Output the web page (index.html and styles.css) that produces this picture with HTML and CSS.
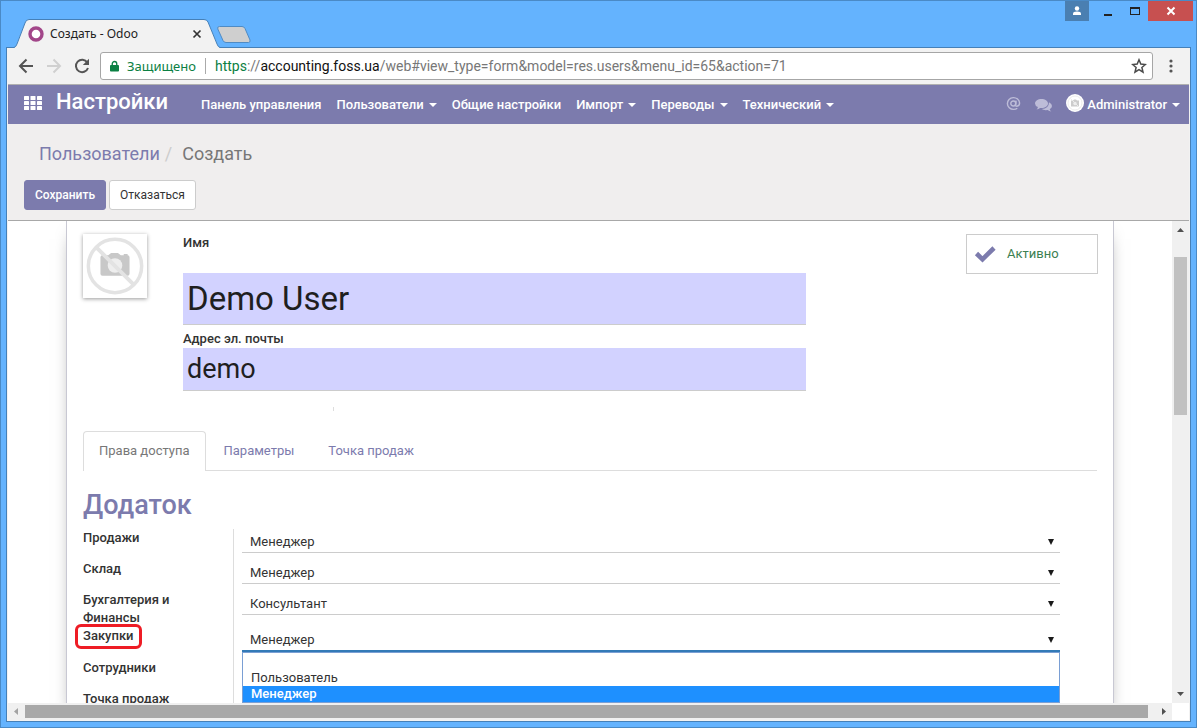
FILE: index.html
```html
<!DOCTYPE html>
<html lang="ru">
<head>
<meta charset="utf-8">
<title>Создать - Odoo</title>
<link rel="stylesheet" href="styles.css">
</head>
<body>
<div class="window">
  <header class="titlebar">
    <div class="tab">
      <svg class="tab-shape" viewBox="0 0 206 29" preserveAspectRatio="none" aria-hidden="true">
        <path d="M0 29 L2 27 L11 4 Q12 .5 15 .5 H190 Q193 .5 194 3 L204 27 L206 29Z" fill="#f2f2f2"/>
        <path d="M0 28.500 Q2 28 3 25 L11 4 Q12 .5 15 .5 H190 Q193 .5 194 3 L203 25 Q204 28 206 28.500" fill="none" stroke="#4580b8"/>
      </svg>
      <svg class="favicon" viewBox="0 0 16 16" aria-hidden="true"><circle cx="8" cy="8" r="6" fill="#fff" stroke="#a24689" stroke-width="3.400"/></svg>
      <span class="tab-title">Создать - Odoo</span>
      <button class="tab-close" aria-label="Закрыть вкладку"><svg viewBox="0 0 10 10"><path d="M1.500 1.500l7 7M8.500 1.500l-7 7" stroke="#333" stroke-width="1.700"/></svg></button>
    </div>
    <button class="new-tab" aria-label="Новая вкладка"><svg viewBox="0 0 34 17"><path d="M2.500 .5H25Q27 .5 28 2.500L33 14Q33.500 16.500 31.500 16.500H9Q7 16.500 6 14.500L.8 3Q0 .5 2.500 .5Z" fill="#cfcfcf" stroke="#4f8bc4"/></svg></button>
    <div class="caption">
      <button class="cap-user" aria-label="Профиль"><svg viewBox="0 0 10 10"><circle cx="5" cy="2.500" r="2.200" fill="#fff"/><path d="M1 9V7.500Q1 5.500 5 5.500T9 7.500V9Z" fill="#fff"/></svg></button>
      <button class="cap-min" aria-label="Свернуть"><svg viewBox="0 0 10 10"><path d="M1 7h8v2H1z" fill="#222"/></svg></button>
      <button class="cap-max" aria-label="Развернуть"><svg viewBox="0 0 10 8"><path d="M0 0h10v8H0zM1 2v5h8V2z" fill="#222" fill-rule="evenodd"/></svg></button>
      <button class="cap-close" aria-label="Закрыть"><svg viewBox="0 0 10 10"><path d="M1.500 1.500l7 7M8.500 1.500l-7 7" stroke="#fff" stroke-width="2"/></svg></button>
    </div>
  </header>

  <div class="frame">
    <div class="toolbar">
      <button aria-label="Назад"><svg viewBox="0 0 16 16"><path d="M15 8H2.500M8.500 1.500L2 8l6.500 6.500" fill="none" stroke="#555" stroke-width="2"/></svg></button>
      <button aria-label="Вперёд"><svg viewBox="0 0 16 16"><path d="M1 8h12.500M7.500 1.500L14 8l-6.500 6.500" fill="none" stroke="#d0d0d0" stroke-width="2"/></svg></button>
      <button aria-label="Обновить"><svg viewBox="0 0 16 16"><path d="M13.300 4.500A6.200 6.200 0 1 0 14 10" fill="none" stroke="#555" stroke-width="2"/><path d="M15 .8V7H8.800Z" fill="#555"/></svg></button>
      <div class="omnibox">
        <svg class="lock" viewBox="0 0 10 12" aria-hidden="true"><path d="M1 5h8q1 0 1 1v5q0 1-1 1H1q-1 0-1-1V6q0-1 1-1z" fill="#0b8043"/><path d="M2.500 6V3.500a2.500 2.500 0 0 1 5 0V6" fill="none" stroke="#0b8043" stroke-width="1.500"/></svg>
        <span class="secure">Защищено</span>
        <div class="url" role="textbox" aria-label="Адрес" contenteditable="true" spellcheck="false"><span class="scheme">https</span>://<span class="host">accounting.foss.ua</span>/web#view_type=form&amp;model=res.users&amp;menu_id=65&amp;action=71</div>
        <button class="star" aria-label="В закладки"><svg viewBox="0 0 16 16"><path d="M8 1.800l1.800 4.300 4.600.4-3.500 3 1.100 4.600L8 11.600l-4 2.500 1.100-4.600-3.500-3 4.600-.4z" fill="none" stroke="#4a4a4a" stroke-width="1.500"/></svg></button>
      </div>
      <button class="menu" aria-label="Меню"><svg viewBox="0 0 16 16"><g fill="#555"><circle cx="8" cy="3" r="1.600"/><circle cx="8" cy="8" r="1.600"/><circle cx="8" cy="13" r="1.600"/></g></svg></button>
    </div>

    <nav class="navbar">
      <a class="apps" href="#" aria-label="Приложения"><svg viewBox="0 0 18 14"><g fill="#fff"><rect width="5" height="4" rx=".6"/><rect x="6.500" width="5" height="4" rx=".6"/><rect x="13" width="5" height="4" rx=".6"/><rect y="5" width="5" height="4" rx=".6"/><rect x="6.500" y="5" width="5" height="4" rx=".6"/><rect x="13" y="5" width="5" height="4" rx=".6"/><rect y="10" width="5" height="4" rx=".6"/><rect x="6.500" y="10" width="5" height="4" rx=".6"/><rect x="13" y="10" width="5" height="4" rx=".6"/></g></svg></a>
      <a class="brand" href="#">Настройки</a>
      <div class="nav-links">
        <a href="#">Панель управления</a>
        <a class="has-menu" href="#">Пользователи</a>
        <a href="#">Общие настройки</a>
        <a class="has-menu" href="#">Импорт</a>
        <a class="has-menu" href="#">Переводы</a>
        <a class="has-menu" href="#">Технический</a>
      </div>
      <div class="systray">
        <a class="at" href="#" aria-label="Упоминания"><svg viewBox="0 0 16 16"><g fill="none" stroke="#bdbcd8" stroke-width="1.500"><circle cx="7.800" cy="8" r="2.700"/><path d="M10.800 5l-.7 4.500q0 1.500 1.500 1.500Q14.500 10.500 14.500 7.500A6.500 6.300 0 1 0 8 14.300q2.500 0 4-1.300"/></g></svg></a>
        <a class="chat" href="#" aria-label="Сообщения"><svg viewBox="0 0 17 14"><g fill="#bdbcd8"><path d="M6.500 1C10 1 13 2.900 13 5.500S10 10 6.500 10q-.7 0-1.400-.1Q3.500 11.300 1.500 11.500 2.700 10.500 2.900 9 0 7.800 0 5.500C0 2.900 3 1 6.500 1z"/><path d="M14 4.200q3 1.500 3 3.800 0 2-2.300 3.300.3 1.200 1.600 2.300-2-.2-3.700-1.600-3.600.6-6-1Q14 10.500 14 4.200z"/></g></svg></a>
        <a class="has-menu user" href="#"><svg viewBox="0 0 18 18" aria-hidden="true"><circle cx="9" cy="9" r="9" fill="#fff"/><circle cx="9" cy="9" r="7" fill="none" stroke="#ececec"/><path d="M5 6.500h2l1-1h2l1 1h2v6H5z" fill="#ccc"/><circle cx="9" cy="9.500" r="1.700" fill="#eee"/><path d="M4.500 4.500l9 9" stroke="#ececec"/></svg>Administrator</a>
      </div>
    </nav>

    <section class="control-panel">
      <div class="breadcrumb"><a href="#">Пользователи</a><span class="slash">/</span><span class="current">Создать</span></div>
      <div class="actions"><button class="btn primary">Сохранить</button><button class="btn">Отказаться</button></div>
    </section>

    <div class="viewport">
      <main class="content">
        <form class="sheet">
          <div class="top">
            <div class="avatar"><svg viewBox="0 0 66 66" role="img" aria-label="Нет фото"><path d="M18 24q0-2 2-2h6l3-2.500h7l3 2.500h3v-1.500h4V22q2 0 2 2v17q0 2-2 2H20q-2 0-2-2z" fill="#c8c8c8"/><circle cx="33" cy="32.500" r="7.500" fill="#eee"/><circle cx="33" cy="33" r="27.500" fill="none" stroke="#e3e3e3" stroke-width="3.600"/><path d="M14 14l38 38" stroke="#e3e3e3" stroke-width="4"/></svg></div>
            <div class="title">
              <label for="name">Имя</label>
              <input id="name" class="name" value="Demo User">
              <label for="email">Адрес эл. почты</label>
              <input id="email" class="email" value="demo">
              <i class="group-line"></i>
            </div>
            <button type="button" class="stat"><svg viewBox="0 0 22 18" aria-hidden="true"><path d="M2.500 8.500l6 5.800L20 3" fill="none" stroke="#7c7bad" stroke-width="4.600"/></svg>Активно</button>
          </div>

          <div class="tabs" role="tablist">
            <a class="active" role="tab" href="#">Права доступа</a>
            <a role="tab" href="#">Параметры</a>
            <a role="tab" href="#">Точка продаж</a>
          </div>

          <h2>Додаток</h2>
          <div class="group">
            <div class="row"><label for="f1">Продажи</label><div class="value"><div class="select"><select id="f1"><option>Менеджер</option></select></div></div></div>
            <div class="row"><label for="f2">Склад</label><div class="value"><div class="select"><select id="f2"><option>Менеджер</option></select></div></div></div>
            <div class="row"><label for="f3">Бухгалтерия и Финансы</label><div class="value"><div class="select"><select id="f3"><option>Консультант</option></select></div></div></div>
            <div class="row"><label for="f4"><span class="marked">Закупки</span></label><div class="value"><div class="select open"><select id="f4"><option>Менеджер</option></select>
              <ul class="options" role="listbox"><li role="option" aria-label="Пусто"></li><li role="option">Пользователь</li><li role="option" class="selected" aria-selected="true">Менеджер</li></ul></div></div></div>
            <div class="row"><label for="f5">Сотрудники</label><div class="value"><div class="select"><select id="f5"><option></option></select></div></div></div>
            <div class="row"><label for="f6">Точка продаж</label><div class="value"><div class="select"><select id="f6"><option></option></select></div></div></div>
          </div>
        </form>
      </main>
      <div class="vscroll" aria-hidden="true">
        <svg viewBox="0 0 17 17"><path d="M5 11l3.500-4 3.500 4z" fill="#505050"/></svg>
        <div class="before"></div><div class="thumb"></div><div class="after"></div>
        <svg viewBox="0 0 17 17"><path d="M5 6l3.500 4L12 6z" fill="#505050"/></svg>
      </div>
    </div>
    <div class="hscroll" aria-hidden="true">
      <svg viewBox="0 0 17 17"><path d="M10 5L6 8.500l4 3.500z" fill="#a3a3a3"/></svg>
      <div class="thumb"></div><div class="after"></div>
      <svg viewBox="0 0 17 17"><path d="M7 5l4 3.500L7 12z" fill="#505050"/></svg>
      <div class="corner"></div>
    </div>
  </div>
</div>
</body>
</html>
```

FILE: styles.css
```css
* { box-sizing: border-box; }
body { margin: 0; font: 13px/18px Roboto, sans-serif; color: #333; }
button { border: 0; padding: 0; background: none; font: inherit; color: inherit; }
a { color: #7c7bad; text-decoration: none; }
svg { display: block; flex: none; }

.window { display: flex; flex-direction: column; height: 100vh; padding: 0 5px 5px; border: 1px solid #4a8ac6; background: #64b3fe; }

/* title bar */
.titlebar { display: flex; align-items: flex-end; height: 46px; padding-left: 8px; }
.tab { position: relative; display: flex; align-items: center; width: 206px; height: 29px; margin-bottom: -1px; padding: 0 18px 0 14px; font: 12px/16px "Noto Sans", sans-serif; color: #222; }
.tab-shape { position: absolute; inset: 0; width: 100%; height: 100%; }
.tab > :not(.tab-shape) { position: relative; }
.favicon { width: 16px; height: 16px; margin-right: 6px; }
.tab-title { flex: 1; white-space: nowrap; }
.tab-close svg { width: 10px; height: 10px; }
.new-tab { margin: 0 0 4px -3px; }
.new-tab svg { width: 34px; height: 17px; }
.caption { display: flex; align-self: flex-start; margin-left: auto; margin-right: -2px; }
.caption button { display: flex; align-items: center; justify-content: center; height: 20px; }
.caption svg { width: 10px; height: 10px; }
.cap-user { width: 24px; background: #4a7fb1; }
.cap-min { width: 38px; }
.cap-max { width: 16px; margin-right: 5px; }
.caption .cap-max svg { height: 8px; }
.caption .cap-close { width: 45px; background: #c75050; }
.cap-min svg { margin-top: 2px; }

/* browser chrome */
.frame { display: flex; flex-direction: column; flex: 1; min-height: 0; padding: 0 1px 1px; border: 1px solid #4580b8; background: #f2f2f2; }
.toolbar { display: flex; align-items: center; gap: 12px; height: 37px; padding: 0 10px; border-bottom: 1px solid #b0b0b0; }
.toolbar svg { width: 16px; height: 16px; }
.omnibox { display: flex; align-items: center; flex: 1; min-width: 0; height: 28px; margin-left: -2px; padding: 0 5px 0 9px; border: 1px solid #a6a6a6; border-radius: 3px; background: #fff; font: 14px/20px Roboto, sans-serif; }
.omnibox .lock { width: 9px; height: 12px; margin-right: 8px; }
.secure { padding-right: 9px; border-right: 1px solid #aaa; color: #0b8043; font: 13px/16px "Noto Sans", sans-serif; }
.url { flex: 1; min-width: 0; margin-left: 9px; overflow: hidden; white-space: nowrap; color: #777; outline: 0; }
.scheme { color: #0b8043; }
.host { color: #111; }
.menu { margin-left: -2px; }

/* Odoo navigation */
.navbar { display: flex; align-items: center; flex: none; height: 39px; padding: 0 9px 0 16px; background: #7c7bad; }
.navbar a { color: #fff; white-space: nowrap; }
.apps svg { width: 18px; height: 14px; margin-bottom: 4px; }
.navbar .brand { margin: 0 33px 6px 14px; font-size: 22px; font-weight: 500; line-height: 28px; }
.nav-links { display: flex; gap: 15px; font-weight: 500; }
.has-menu::after { content: ""; display: inline-block; margin-left: 5px; vertical-align: 2px; border: 4px solid transparent; border-top-color: #fff; border-bottom: 0; }
.systray { display: flex; align-items: center; gap: 14px; margin-left: auto; font-weight: 500; }
.at svg { width: 15px; height: 15px; margin-bottom: 2px; }
.chat svg { width: 17px; height: 14px; }
.user { display: flex; align-items: center; }
.user svg { width: 18px; height: 18px; margin: 0 3px 4px 0; }

.control-panel { flex: none; height: 97px; padding: 19px 16px 0; border-bottom: 1px solid #a8a8a8; background: #f0eeee; }
.breadcrumb { padding-left: 15px; font-size: 18px; line-height: 22px; }
.slash { padding: 0 10px 0 5px; color: #ccc; }
.current { color: #777; }
.actions { display: flex; gap: 3px; margin-top: 15px; }
.btn { height: 30px; padding: 0 10px; border: 1px solid #ccc; border-radius: 3px; background: #fff; font-size: 12px; }
.btn.primary { border-color: #7c7bad; background: #7c7bad; color: #fff; font-weight: 500; }

/* form */
.viewport { display: flex; flex: 1; min-height: 0; background: #fff; }
.content { flex: 1; min-width: 0; overflow: hidden; padding: 0 58px; }
.sheet { min-height: 100%; padding: 13px 16px 0; border: solid #c8c8d3; border-width: 0 1px; box-shadow: 0 5px 20px -13px #000; }
.sheet label { font-weight: 500; }
.top { display: flex; align-items: flex-start; }
.avatar { width: 64px; height: 64px; margin-right: 36px; background: #fff; box-shadow: 0 1px 4px rgba(0,0,0,.4); }
.avatar svg { width: 64px; height: 64px; }
.title { display: flex; flex-direction: column; flex: 0 1 623px; min-width: 0; }
.title input { width: 100%; padding: 0 4px; border: 0; border-bottom: 1px solid #ccc; border-radius: 0; background: #d2d2ff; color: #1f1f1f; font-family: inherit; outline: 0; }
.title .name { height: 52px; margin: 21px 0 5px; font-size: 33px; }
.title .email { height: 43px; font-size: 27px; }
.group-line { width: 1px; height: 4px; margin: 16px 0 0 150px; background: #ddd; }
.stat { display: flex; align-items: center; width: 132px; height: 40px; margin: 0 -1px 0 auto; padding-left: 7px; border: 1px solid #ccc; color: #3c8052; }
.stat svg { width: 22px; height: 18px; margin-right: 11px; }

.tabs { display: flex; margin-top: 20px; border-bottom: 1px solid #ddd; }
.tabs a { height: 39px; margin-right: 2px; padding: 11px 16px 0; }
.tabs .active { height: 40px; margin-bottom: -1px; padding: 10px 15px 0; border: 1px solid #ddd; border-bottom: 0; border-radius: 4px 4px 0 0; background: #fff; color: #777; }
h2 { margin: 20px 0 10px; font-size: 27px; line-height: 28px; font-weight: 500; color: #7c7bad; }

.group { padding-right: 37px; }
.row { display: flex; min-height: 31px; }
.row label { flex: 0 0 150px; padding-right: 40px; }
.value { flex: 1; min-width: 0; padding: 0 0 7px 8px; border-left: 1px solid #ddd; }
.select { position: relative; border-bottom: 1px solid #ccc; }
.select::after { content: ""; position: absolute; right: 6px; top: 10px; border: 3px solid transparent; border-top: 6px solid #1a1a1a; border-bottom: 0; }
.select select { display: block; width: 100%; height: 23px; padding: 2px 8px 0; border: 0; appearance: none; background: none; font: inherit; color: #333; outline: 0; }
.select.open { border-bottom: 2px solid #337ab7; }
.options { position: absolute; z-index: 2; top: 25px; left: 0; right: 0; margin: 0; padding: 1px 0 0; border: 1px solid #7a9fd4; background: #fff; list-style: none; }
.options li { height: 16px; padding-left: 8px; line-height: 16px; }
.options .selected { background: #1e90ff; color: #fff; font-weight: 500; }
.marked { position: relative; }
.marked::after { content: ""; position: absolute; inset: -4px -8px -6px; border: 3px solid #ee1c25; border-radius: 6px; }

/* scroll bars */
.vscroll { display: flex; flex-direction: column; flex: 0 0 17px; background: #f0f0f0; }
.vscroll svg, .hscroll svg { width: 17px; height: 17px; }
.vscroll .before { flex: 19; }
.vscroll .thumb { flex: 158; margin: 0 2px; background: #c1c1c1; }
.vscroll .after { flex: 271; }
.hscroll { display: flex; flex: none; height: 17px; background: #f0f0f0; }
.hscroll .thumb { flex: 1123; margin: 2px 0; background: #a8a8a8; }
.hscroll .after { flex: 7; }
.corner { width: 17px; background: #fff; }
```
